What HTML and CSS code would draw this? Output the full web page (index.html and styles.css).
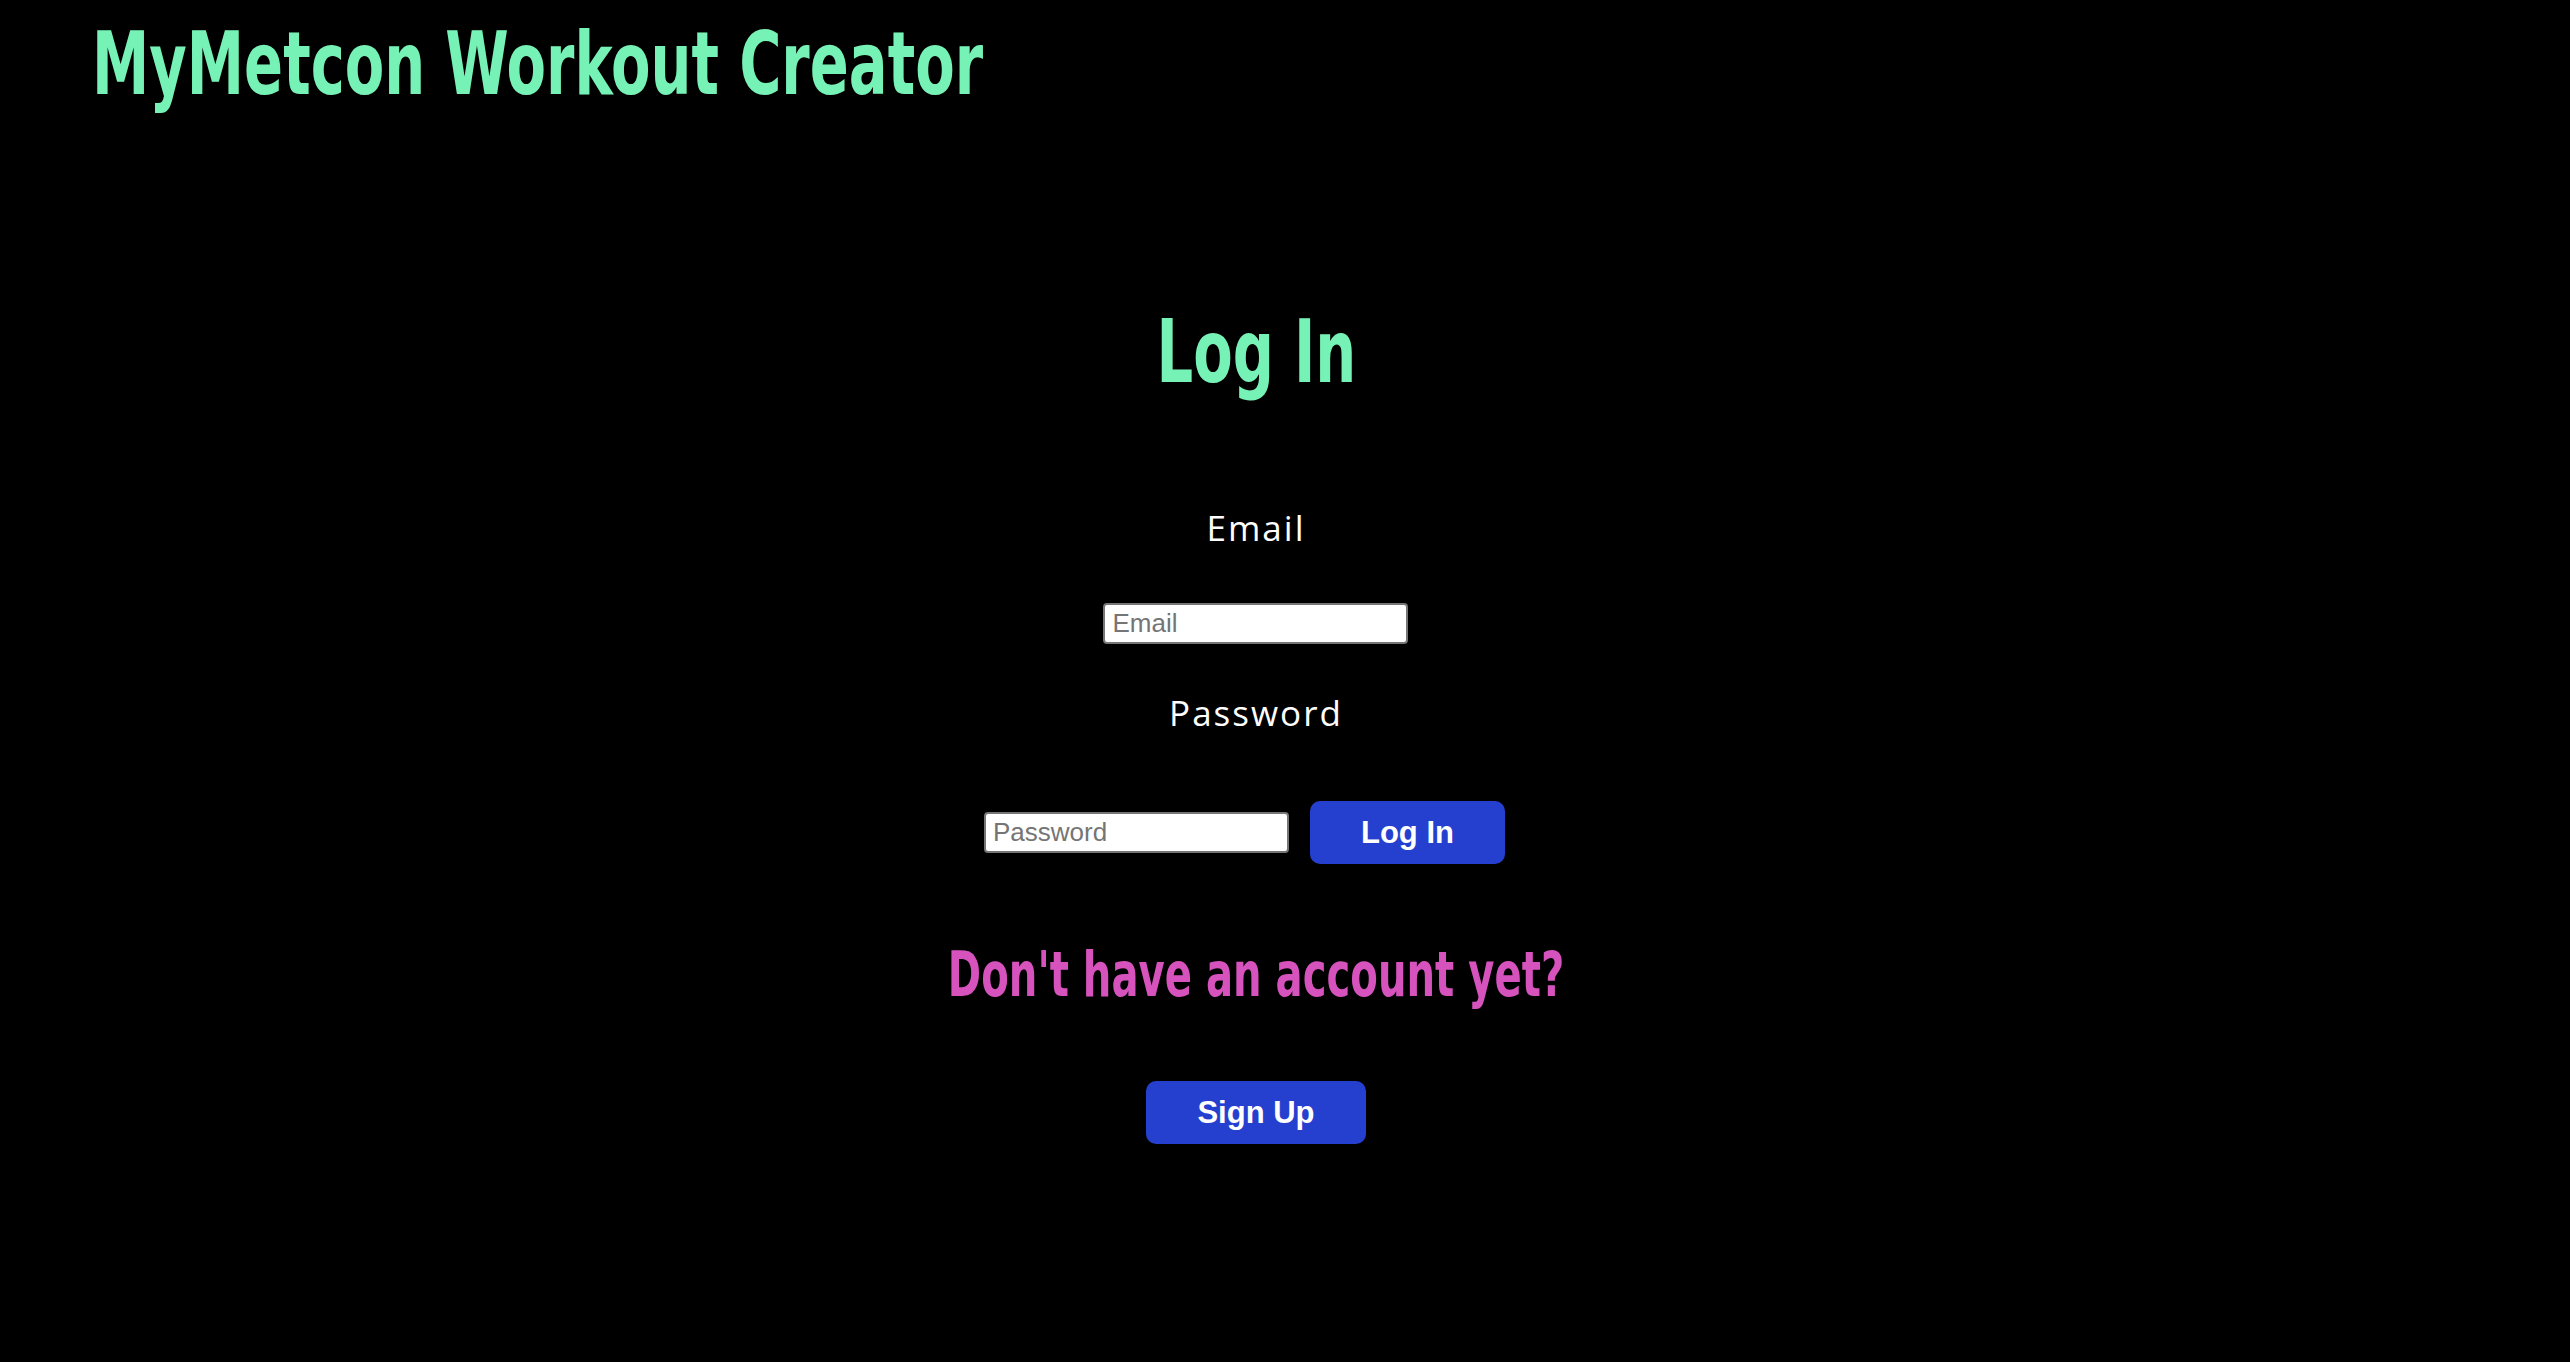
FILE: index.html
```html
<!DOCTYPE html>
<html lang="en">
<head>
<meta charset="utf-8">
<title>MyMetcon Workout Creator</title>
<link rel="stylesheet" href="styles.css">
</head>
<body>
<header class="site-header">
  <h1 class="site-title">MyMetcon Workout Creator</h1>
</header>
<main class="page">
  <h2 class="page-title">Log In</h2>
  <form class="login-form">
    <label class="field-label" for="email">Email</label>
    <div class="field-row">
      <input class="text-input" id="email" type="email" placeholder="Email">
    </div>
    <label class="field-label" for="password">Password</label>
    <div class="field-row field-row--submit">
      <input class="text-input" id="password" type="password" placeholder="Password">
      <button class="btn" type="submit">Log In</button>
    </div>
  </form>
  <h3 class="signup-prompt">Don't have an account yet?</h3>
  <button class="btn btn--signup" type="button">Sign Up</button>
</main>
</body>
</html>
```
FILE: styles.css
```css
html, body {
  margin: 0;
  padding: 0;
  background: #000;
  min-height: 100%;
}

body {
  font-family: "Liberation Sans", Arial, sans-serif;
}

.site-header {
  padding: 20px 0 0 92px;
}

.site-title,
.page-title,
.signup-prompt {
  font-family: "DejaVu Sans Condensed", "DejaVu Sans", sans-serif;
  font-weight: 700;
  margin: 0;
  line-height: 1;
  display: inline-block;
  white-space: nowrap;
}

.site-title {
  font-size: 88px;
  color: #77f2b6;
  transform: scaleX(0.727);
  transform-origin: left center;
}

.page {
  margin-right: 58px;
  display: flex;
  flex-direction: column;
  align-items: center;
}

.page-title {
  font-size: 88px;
  color: #77f2b6;
  margin-top: 200px;
  transform: scaleX(0.727);
}

.login-form {
  display: flex;
  flex-direction: column;
  align-items: center;
  margin-top: 111px;
}

.field-label {
  font-family: "Open Sans", "Noto Sans", sans-serif;
  font-size: 35px;
  letter-spacing: 2px;
  color: #fff;
  line-height: 1.2;
}

.field-row {
  display: flex;
  align-items: center;
  gap: 21px;
  margin: 54px 0 48px;
}

.field-row--submit {
  margin-top: 67px;
  padding-right: 23px;
}

.text-input {
  box-sizing: border-box;
  width: 305px;
  height: 41px;
  border: 2px solid #767676;
  border-radius: 4px;
  padding: 0 7px;
  font-family: "Liberation Sans", Arial, sans-serif;
  font-size: 26px;
  color: #000;
  background: #fff;
}

.text-input::placeholder {
  color: #757575;
}

.btn {
  height: 63px;
  padding: 0 51px;
  border: none;
  border-radius: 10px;
  background: #2540cf;
  color: #fff;
  font-family: "Liberation Sans", Arial, sans-serif;
  font-weight: 700;
  font-size: 31px;
}

.signup-prompt {
  font-size: 62px;
  color: #d653bd;
  margin-top: 32px;
  transform: scaleX(0.72);
}

.btn--signup {
  margin-top: 75px;
}
```
